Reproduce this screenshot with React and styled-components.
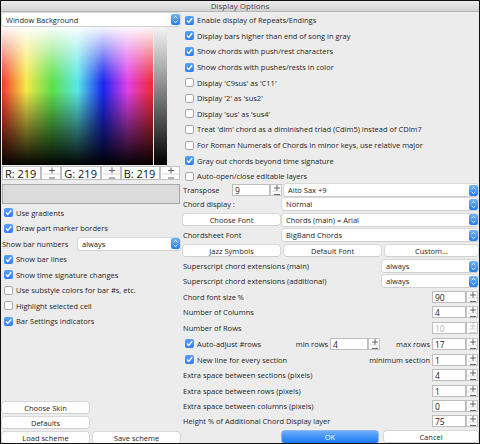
import React from "react";
import styled, { createGlobalStyle } from "styled-components";

const GlobalStyle = createGlobalStyle`
  html, body { margin: 0; padding: 0; background: #ffffff; }
  * { box-sizing: border-box; }
`;

const Arrow = () => (
  <ArrowBox viewBox="0 0 9 11" width="9" height="11">
    <defs>
      <linearGradient id="ag" x1="0" y1="0" x2="0" y2="1">
        <stop offset="0" stopColor="#6fb3fb" />
        <stop offset="1" stopColor="#1c7ff5" />
      </linearGradient>
    </defs>
    <rect x="0" y="0" width="9" height="11" rx="2" fill="url(#ag)" />
    <path d="M2.6 4.2 L4.5 2.4 L6.4 4.2 M2.6 6.8 L4.5 8.6 L6.4 6.8" stroke="#fff" strokeWidth="1" fill="none" />
  </ArrowBox>
);

const Select = ({ children, $h = 12 }) => (
  <SelectBox $h={$h}>
    <span>{children}</span>
    <Arrow />
  </SelectBox>
);

const Stepper = ({ $w = 12, $h = 12, disabled }) => {
  const c = disabled ? "#c4c4c4" : "#555";
  const mid = $h / 2;
  const cx = $w / 2;
  return (
    <StepperBox $w={$w} $h={$h}>
      <svg width={$w} height={$h} viewBox={`0 0 ${$w} ${$h}`}>
        <line x1={cx - 3} y1={mid / 2} x2={cx + 3} y2={mid / 2} stroke={c} strokeWidth="0.9" />
        <line x1={cx} y1={mid / 2 - 3} x2={cx} y2={mid / 2 + 3} stroke={c} strokeWidth="0.9" />
        <line x1="1" y1={mid} x2={$w - 1} y2={mid} stroke="#c8c8c8" strokeWidth="0.7" />
        <line x1={cx - 3} y1={mid + mid / 2 + 0.5} x2={cx + 3} y2={mid + mid / 2 + 0.5} stroke={c} strokeWidth="0.9" />
      </svg>
    </StepperBox>
  );
};

const NumberField = ({ value, $w = 34, disabled }) => (
  <NumberWrap>
    <NumInput $w={$w} $disabled={disabled}>{value}</NumInput>
    <Stepper disabled={disabled} />
  </NumberWrap>
);

const Check = ({ checked, children, $h = 15.6, $indent = 2 }) => (
  <CheckRow $h={$h} $indent={$indent}>
    <Box $checked={checked}>
      {checked && (
        <svg width="9" height="9" viewBox="0 0 9 9">
          <path d="M2 4.6 L3.8 6.5 L7.2 2.3" stroke="#fff" strokeWidth="1.4" fill="none" />
        </svg>
      )}
    </Box>
    <span>{children}</span>
  </CheckRow>
);

const rightChecks = [
  ["Enable display of Repeats/Endings", true],
  ["Display bars higher than end of song in gray", true],
  ["Show chords with push/rest characters", true],
  ["Show chords with pushes/rests in color", true],
  ["Display 'C9sus' as 'C11'", false],
  ["Display '2' as 'sus2'", false],
  ["Display 'sus' as 'sus4'", false],
  ["Treat 'dim' chord as a diminished triad (Cdim5) instead of CDim7", false],
  ["For Roman Numerals of Chords in minor keys, use relative major", false],
  ["Gray out chords beyond time signature", true],
  ["Auto-open/close editable layers", false],
];

const numberRows = [
  ["Chord font size %", "90"],
  ["Number of Columns", "4"],
  ["Number of Rows", "10", true],
];

const spaceRows = [
  ["Extra space between sections (pixels)", "4"],
  ["Extra space between rows (pixels)", "1"],
  ["Extra space between columns (pixels)", "0"],
  ["Height % of Additional Chord Display layer", "75"],
];

export default function App() {
  return (
    <>
      <GlobalStyle />
      <Window>
        <TitleBar>Display Options</TitleBar>
        <Body>
          <LeftCol>
            <TopSelect>
              <Select $h={13}>Window Background</Select>
            </TopSelect>
            <Picker>
              <Spectrum />
              <GrayBar />
            </Picker>
            <RgbRow>
              {["R", "G", "B"].map((c) => (
                <RgbGroup key={c}>
                  <RgbField>{c}: 219</RgbField>
                  <Stepper $w={20} $h={14} />
                </RgbGroup>
              ))}
            </RgbRow>
            <Swatch />
            <LeftList>
              <Check checked $h={15.5}>Use gradients</Check>
              <Check checked $h={15.5}>Draw part marker borders</Check>
              <LabelSelectRow>
                <span>Show bar numbers</span>
                <Select>always</Select>
              </LabelSelectRow>
              <Check checked $h={15.5}>Show bar lines</Check>
              <Check checked $h={15.5}>Show time signature changes</Check>
              <Check $h={15.5}>Use substyle colors for bar #s, etc.</Check>
              <Check $h={15.5}>Highlight selected cell</Check>
              <Check checked $h={15.5}>Bar Settings indicators</Check>
            </LeftList>
            <ButtonStack>
              <HalfRow>
                <Button>Choose Skin</Button>
              </HalfRow>
              <HalfRow>
                <Button>Defaults</Button>
              </HalfRow>
              <HalfRow>
                <Button>Load scheme</Button>
                <Button>Save scheme</Button>
              </HalfRow>
            </ButtonStack>
          </LeftCol>

          <RightCol>
            {rightChecks.map(([label, on]) => (
              <Check key={label} checked={on}>
                {label}
              </Check>
            ))}

            <FlexRow $h={12.5}>
              <FixedLabel $w={47}>Transpose</FixedLabel>
              <NumberField value="9" $w={38} />
              <Grow>
                <Select>Alto Sax +9</Select>
              </Grow>
            </FlexRow>
            <GridRow>
              <span>Chord display :</span>
              <Select>Normal</Select>
            </GridRow>
            <GridRow>
              <Button>Choose Font</Button>
              <Select>Chords (main) = Arial</Select>
            </GridRow>
            <GridRow>
              <span>Chordsheet Font</span>
              <Select>BigBand Chords</Select>
            </GridRow>
            <TripleRow>
              <Button>Jazz Symbols</Button>
              <Button>Default Font</Button>
              <Button>Custom...</Button>
            </TripleRow>
            <WideSelectRow>
              <span>Superscript chord extensions (main)</span>
              <Select>always</Select>
            </WideSelectRow>
            <WideSelectRow>
              <span>Superscript chord extensions (additional)</span>
              <Select>always</Select>
            </WideSelectRow>
            {numberRows.map(([label, v, dis]) => (
              <FlexRow key={label}>
                <Grow>{label}</Grow>
                <NumberField value={v} disabled={dis} />
              </FlexRow>
            ))}
            <FlexRow $h={16.5}>
              <Grow>
                <Check checked $h={16.5}>Auto-adjust #rows</Check>
              </Grow>
              <InlineLabel>min rows</InlineLabel>
              <NumberField value="4" $w={38} />
              <InlineLabel $gap={14}>max rows</InlineLabel>
              <NumberField value="17" />
            </FlexRow>
            <FlexRow>
              <Grow>
                <Check checked>New line for every section</Check>
              </Grow>
              <InlineLabel>minimum section</InlineLabel>
              <NumberField value="1" />
            </FlexRow>
            {spaceRows.map(([label, v]) => (
              <FlexRow key={label}>
                <Grow>{label}</Grow>
                <NumberField value={v} />
              </FlexRow>
            ))}
            <Footer>
              <PrimaryButton>OK</PrimaryButton>
              <Button>Cancel</Button>
            </Footer>
          </RightCol>
        </Body>
      </Window>
    </>
  );
}

const Window = styled.div`
  width: 480px;
  height: 444px;
  border: 1px solid #111;
  background: #ececec;
  display: flex;
  flex-direction: column;
  overflow: hidden;
  font-family: "Open Sans", "Liberation Sans", sans-serif;
  font-size: 7.5px;
  color: #1e1e1e;
`;

const TitleBar = styled.div`
  height: 11px;
  flex: none;
  background: linear-gradient(#ececec, #d3d3d3);
  border-bottom: 1px solid #b4b4b4;
  text-align: center;
  line-height: 10px;
  font-size: 8px;
  color: #4a4a4a;
`;

const Body = styled.div`
  flex: 1;
  display: flex;
  gap: 3px;
  padding: 0 1px 0 1px;
  min-height: 0;
`;

const LeftCol = styled.div`
  width: 178px;
  display: flex;
  flex-direction: column;
`;

const RightCol = styled.div`
  flex: 1;
  display: flex;
  flex-direction: column;
  padding-top: 0.5px;
`;

const TopSelect = styled.div`
  margin-top: 1px;
`;

const SelectBox = styled.div`
  height: ${(p) => p.$h}px;
  background: #ffffff;
  border-radius: 2px;
  box-shadow: 0 0 0 0.5px #c3c3c3, 0 0.5px 0.5px rgba(0, 0, 0, 0.15);
  display: flex;
  align-items: center;
  justify-content: space-between;
  padding-left: 4px;
  white-space: nowrap;
  overflow: hidden;
`;

const ArrowBox = styled.svg`
  flex: none;
  display: block;
`;

const Picker = styled.div`
  margin-top: 1px;
  height: 138px;
  display: flex;
`;

const Spectrum = styled.div`
  width: 151px;
  background: linear-gradient(
      to bottom,
      rgba(255, 255, 255, 0.96) 0%,
      rgba(255, 255, 255, 0.25) 28%,
      rgba(255, 255, 255, 0) 40%,
      rgba(0, 0, 0, 0) 46%,
      rgba(0, 0, 0, 0.98) 100%
    ),
    linear-gradient(
      to right,
      #f03a2a 0%,
      #f7e84a 16%,
      #5ee04a 33%,
      #5ae8e8 50%,
      #1a26f0 67%,
      #e040e8 83%,
      #f02a30 100%
    );
`;

const GrayBar = styled.div`
  width: 13px;
  margin-left: 1px;
  background: linear-gradient(#f4f4f4, #000000);
`;

const RgbRow = styled.div`
  margin-top: 1px;
  height: 14px;
  display: flex;
`;

const RgbGroup = styled.div`
  width: 60px;
  display: flex;
`;

const RgbField = styled.div`
  flex: 1;
  background: #fff;
  border: 0.5px solid #bcbcbc;
  font-size: 11px;
  line-height: 13px;
  padding-left: 2px;
  color: #111;
`;

const StepperBox = styled.div`
  width: ${(p) => p.$w}px;
  height: ${(p) => p.$h}px;
  flex: none;
  background: #fff;
  border: 0.5px solid #c3c3c3;
  svg {
    display: block;
  }
`;

const Swatch = styled.div`
  margin-top: 4px;
  height: 20px;
  background: #dbdbdb;
  border: 1px solid #a9a9a9;
`;

const LeftList = styled.div`
  display: flex;
  flex-direction: column;
  padding-top: 1px;
  flex: 1;
`;

const CheckRow = styled.div`
  height: ${(p) => p.$h}px;
  flex: none;
  display: flex;
  align-items: center;
  gap: 3px;
  padding-left: ${(p) => p.$indent}px;
  white-space: nowrap;
`;

const Box = styled.div`
  width: 9px;
  height: 9px;
  flex: none;
  border-radius: 2px;
  background: ${(p) => (p.$checked ? "linear-gradient(#5aa2f9, #2a7ff3)" : "#ffffff")};
  border: ${(p) => (p.$checked ? "none" : "0.5px solid #a8a8a8")};
  svg {
    display: block;
  }
`;

const LabelSelectRow = styled.div`
  height: 15.5px;
  display: grid;
  grid-template-columns: 76px 1fr;
  align-items: center;
  white-space: nowrap;
`;

const ButtonStack = styled.div`
  display: flex;
  flex-direction: column;
  gap: 4px;
  padding-bottom: 0;
`;

const HalfRow = styled.div`
  display: grid;
  grid-template-columns: 87px 87px;
  gap: 4px;
`;

const Button = styled.div`
  height: 11px;
  background: #ffffff;
  border-radius: 2.5px;
  box-shadow: 0 0 0 0.5px #c4c4c4, 0 0.5px 0.5px rgba(0, 0, 0, 0.15);
  display: flex;
  align-items: center;
  justify-content: center;
  white-space: nowrap;
`;

const PrimaryButton = styled(Button)`
  height: 12px;
  background: linear-gradient(#6aaefb, #1d78f2);
  color: #fff;
  box-shadow: 0 0 0 0.5px #3c84e4;
`;

const FlexRow = styled.div`
  height: ${(p) => p.$h || 15.45}px;
  flex: none;
  display: flex;
  align-items: center;
  gap: 2px;
  white-space: nowrap;
`;

const FixedLabel = styled.span`
  width: ${(p) => p.$w}px;
  flex: none;
`;

const Grow = styled.div`
  flex: 1;
  min-width: 0;
`;

const InlineLabel = styled.span`
  margin-left: ${(p) => p.$gap || 0}px;
`;

const NumberWrap = styled.div`
  display: flex;
  flex: none;
`;

const NumInput = styled.div`
  width: ${(p) => p.$w}px;
  height: 12px;
  background: #fff;
  border: 0.5px solid #bdbdbd;
  padding-left: 2px;
  line-height: 11px;
  font-size: 8.5px;
  color: ${(p) => (p.$disabled ? "#b5b5b5" : "#1e1e1e")};
`;

const GridRow = styled.div`
  height: 15.45px;
  flex: none;
  display: grid;
  grid-template-columns: 97px 1fr;
  column-gap: 2px;
  align-items: center;
  white-space: nowrap;
`;

const TripleRow = styled.div`
  height: 15.45px;
  flex: none;
  display: grid;
  grid-template-columns: 97px 97px 1fr;
  column-gap: 4px;
  align-items: center;
`;

const WideSelectRow = styled.div`
  height: 15.45px;
  flex: none;
  display: grid;
  grid-template-columns: 1fr 96px;
  align-items: center;
  white-space: nowrap;
`;

const Footer = styled.div`
  margin-top: auto;
  display: grid;
  grid-template-columns: 96px 1fr;
  column-gap: 6px;
  padding-left: 99px;
  height: 12px;
`;
